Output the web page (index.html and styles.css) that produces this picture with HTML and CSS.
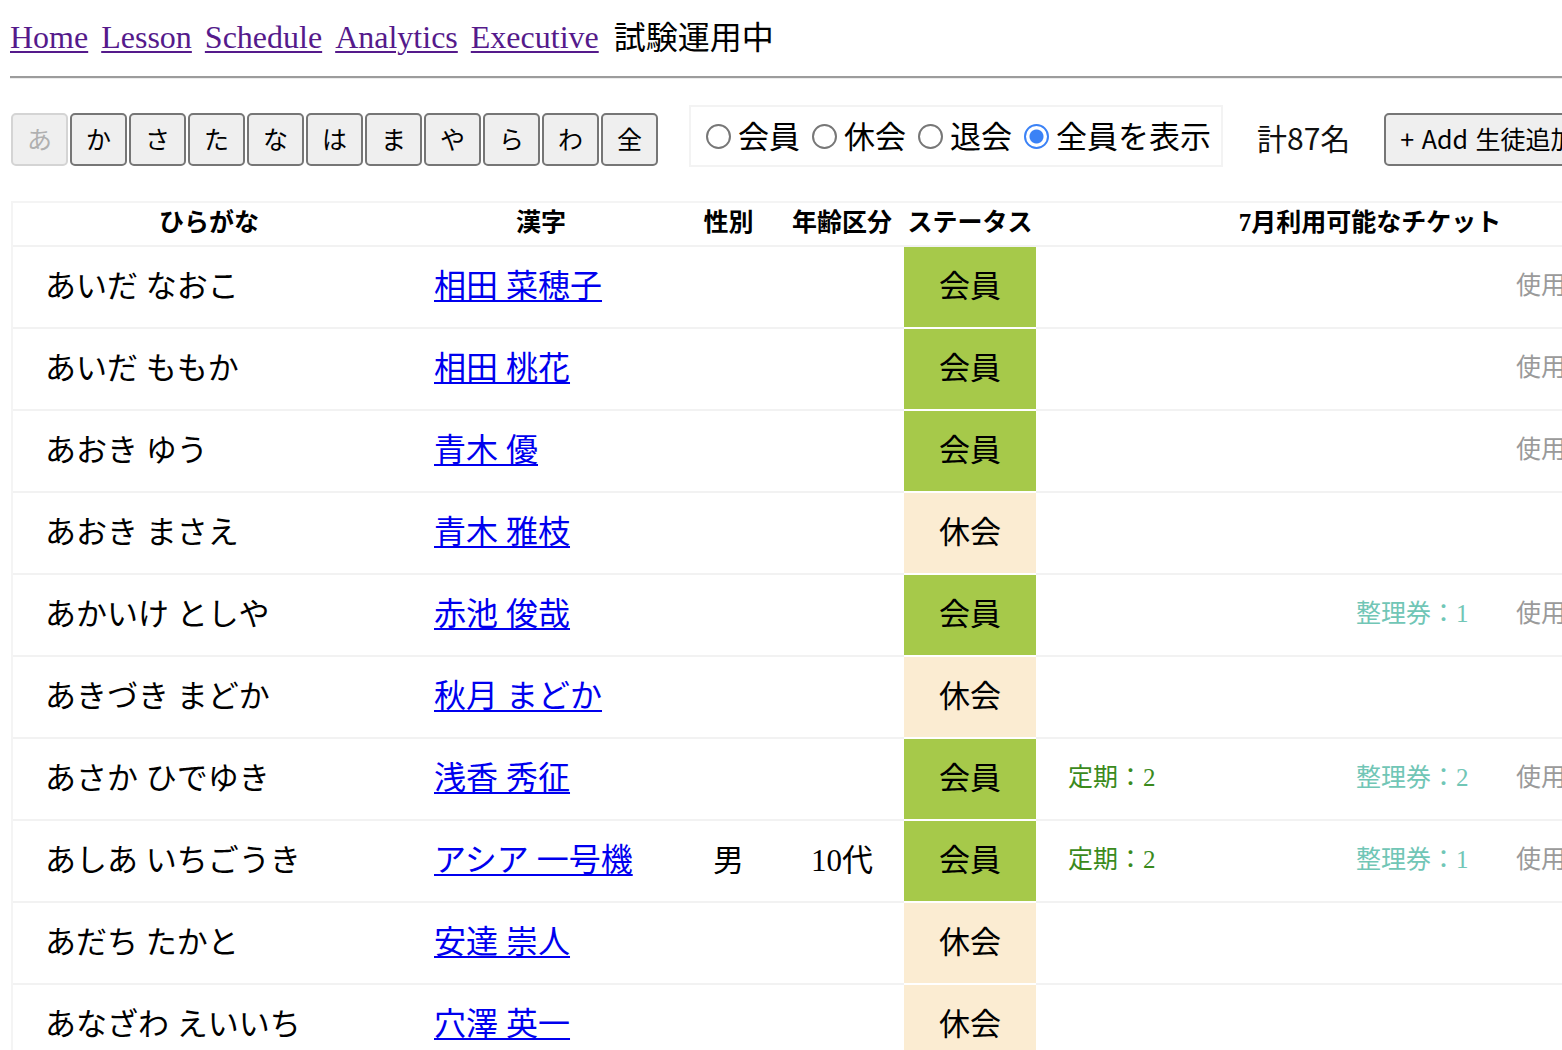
FILE: index.html
```html
<!DOCTYPE html>
<html lang="ja">
<head>
<meta charset="utf-8">
<title>生徒一覧</title>
<link rel="stylesheet" href="styles.css">
</head>
<body>
<div class="page">
  <nav class="nav">
    <a href="#" class="nav-link">Home</a>
    <a href="#" class="nav-link">Lesson</a>
    <a href="#" class="nav-link">Schedule</a>
    <a href="#" class="nav-link">Analytics</a>
    <a href="#" class="nav-link">Executive</a>
    <span class="nav-note">試験運用中</span>
  </nav>
  <hr class="rule">
  <div class="toolbar">
    <div class="kana-group">
      <button class="kana kana-disabled" disabled>あ</button>
      <button class="kana">か</button>
      <button class="kana">さ</button>
      <button class="kana">た</button>
      <button class="kana">な</button>
      <button class="kana">は</button>
      <button class="kana">ま</button>
      <button class="kana">や</button>
      <button class="kana">ら</button>
      <button class="kana">わ</button>
      <button class="kana">全</button>
    </div>
    <div class="radio-box">
      <label class="radio"><span class="dot"></span>会員</label>
      <label class="radio"><span class="dot"></span>休会</label>
      <label class="radio"><span class="dot"></span>退会</label>
      <label class="radio"><span class="dot dot-on"></span>全員を表示</label>
    </div>
    <div class="count">計87名</div>
    <button class="add-btn">+ Add 生徒追加</button>
  </div>
  <table class="students">
    <colgroup>
      <col class="c-kana"><col class="c-kanji"><col class="c-sex"><col class="c-age"><col class="c-status"><col class="c-ticket">
    </colgroup>
    <thead>
      <tr><th>ひらがな</th><th>漢字</th><th>性別</th><th>年齢区分</th><th>ステータス</th><th>7月利用可能なチケット</th></tr>
    </thead>
    <tbody>
      <tr><td class="kana-name">あいだ なおこ</td><td class="kanji"><a href="#">相田 菜穂子</a></td><td class="mid"></td><td class="mid"></td><td class="status member">会員</td><td class="tickets"><span class="t-teiki"></span><span class="t-seiri"></span><span class="t-used">使用済</span></td></tr>
      <tr><td class="kana-name">あいだ ももか</td><td class="kanji"><a href="#">相田 桃花</a></td><td class="mid"></td><td class="mid"></td><td class="status member">会員</td><td class="tickets"><span class="t-teiki"></span><span class="t-seiri"></span><span class="t-used">使用済</span></td></tr>
      <tr><td class="kana-name">あおき ゆう</td><td class="kanji"><a href="#">青木 優</a></td><td class="mid"></td><td class="mid"></td><td class="status member">会員</td><td class="tickets"><span class="t-teiki"></span><span class="t-seiri"></span><span class="t-used">使用済</span></td></tr>
      <tr><td class="kana-name">あおき まさえ</td><td class="kanji"><a href="#">青木 雅枝</a></td><td class="mid"></td><td class="mid"></td><td class="status rest">休会</td><td class="tickets"></td></tr>
      <tr><td class="kana-name">あかいけ としや</td><td class="kanji"><a href="#">赤池 俊哉</a></td><td class="mid"></td><td class="mid"></td><td class="status member">会員</td><td class="tickets"><span class="t-teiki"></span><span class="t-seiri">整理券：1</span><span class="t-used">使用済</span></td></tr>
      <tr><td class="kana-name">あきづき まどか</td><td class="kanji"><a href="#">秋月 まどか</a></td><td class="mid"></td><td class="mid"></td><td class="status rest">休会</td><td class="tickets"></td></tr>
      <tr><td class="kana-name">あさか ひでゆき</td><td class="kanji"><a href="#">浅香 秀征</a></td><td class="mid"></td><td class="mid"></td><td class="status member">会員</td><td class="tickets"><span class="t-teiki">定期：2</span><span class="t-seiri">整理券：2</span><span class="t-used">使用済</span></td></tr>
      <tr><td class="kana-name">あしあ いちごうき</td><td class="kanji"><a href="#">アシア 一号機</a></td><td class="mid">男</td><td class="mid">10代</td><td class="status member">会員</td><td class="tickets"><span class="t-teiki">定期：2</span><span class="t-seiri">整理券：1</span><span class="t-used">使用済</span></td></tr>
      <tr><td class="kana-name">あだち たかと</td><td class="kanji"><a href="#">安達 崇人</a></td><td class="mid"></td><td class="mid"></td><td class="status rest">休会</td><td class="tickets"></td></tr>
      <tr><td class="kana-name">あなざわ えいいち</td><td class="kanji"><a href="#">穴澤 英一</a></td><td class="mid"></td><td class="mid"></td><td class="status rest">休会</td><td class="tickets"></td></tr>
    </tbody>
  </table>
</div>
</body>
</html>
```

FILE: styles.css
```css
html {
  overflow: hidden;
}
body {
  margin: 0;
  font-family: "Liberation Serif", "Noto Sans CJK JP", serif;
  color: #000;
  background: #fff;
}
.page {
  padding: 17px 0 0 10px;
  width: 1720px;
}
.nav {
  display: flex;
  align-items: center;
  gap: 13px;
  height: 40px;
  font-size: 32px;
  line-height: 40px;
}
.nav-link {
  color: #551a8b;
  text-decoration: underline;
  text-decoration-thickness: 2px;
  text-underline-offset: 3px;
}
.nav-note {
  font-family: "Noto Sans CJK JP", sans-serif;
  font-size: 32px;
  margin-left: 2px;
  position: relative;
  top: -2px;
}
.rule {
  margin: 19px 0 0 0;
  border: 0;
  border-top: 2px solid #9c9c9c;
  border-bottom: 1px solid #ececec;
  height: 0;
}
.toolbar {
  display: flex;
  align-items: flex-start;
  margin-top: 26px;
}
.kana-group {
  display: flex;
  gap: 2px;
  margin-top: 8px;
  margin-left: 1px;
}
.kana {
  width: 57px;
  height: 53px;
  box-sizing: border-box;
  border: 2px solid #767676;
  border-radius: 5px;
  background: #efefef;
  font-family: "Noto Sans CJK JP", sans-serif;
  font-size: 25px;
  color: #000;
  padding: 0 0 3px;
}
.kana-disabled {
  border-color: #d4d4d4;
  color: #b0b0b0;
  background: #efefef;
}
.radio-box {
  display: flex;
  align-items: center;
  margin-left: 31px;
  height: 62px;
  box-sizing: border-box;
  border: 2px solid #f3f3f3;
  padding: 0 6px 3px 15px;
  font-family: "Noto Sans CJK JP", sans-serif;
  font-size: 31px;
  width: 534px;
}
.radio {
  display: flex;
  align-items: center;
  margin-right: 12px;
}
.radio:last-child {
  margin-right: 0;
}
.dot {
  width: 25px;
  height: 25px;
  border: 2px solid #777;
  border-radius: 50%;
  margin-right: 7px;
  box-sizing: border-box;
  flex: none;
  position: relative;
  top: 2px;
}
.dot-on {
  border: 2px solid #3b82f6;
  background: radial-gradient(circle, #3b82f6 0 6.5px, #fff 7.5px);
}
.count {
  margin-left: 34px;
  margin-top: 12px;
  font-family: "Noto Sans CJK JP", sans-serif;
  font-size: 30px;
  line-height: 40px;
  color: #111;
}
.add-btn {
  margin-left: 34px;
  margin-top: 8px;
  height: 53px;
  box-sizing: border-box;
  border: 2px solid #767676;
  border-radius: 5px;
  background: #efefef;
  font-family: "Noto Sans CJK JP", sans-serif;
  font-size: 25px;
  padding: 0 14px 3px;
  white-space: nowrap;
  color: #000;
  word-spacing: 2px;
}
.students {
  margin-top: 34px;
  margin-left: 1px;
  width: 1693px;
  table-layout: fixed;
  border-collapse: separate;
  border-spacing: 0;
  border: 2px solid #f4f4f4;
}
.c-kana { width: 392px; }
.c-kanji { width: 272px; }
.c-sex { width: 103px; }
.c-age { width: 124px; }
.c-status { width: 132px; }
.c-ticket { width: 668px; }
.students th {
  height: 44px;
  font-size: 25px;
  line-height: 30px;
  font-weight: 700;
  padding: 0 0 2px;
  box-sizing: border-box;
  text-align: center;
  border-bottom: 2px solid #f2f2f2;
  white-space: nowrap;
}
.students td {
  height: 82px;
  box-sizing: border-box;
  padding: 0 0 8px;
  font-size: 31px;
  border-bottom: 2px solid #f2f2f2;
  vertical-align: middle;
  white-space: nowrap;
}
.students td.kana-name {
  padding-left: 32px;
}
.students td.kanji {
  padding-left: 29px;
  font-size: 32px;
}
.kanji a {
  color: #0000ee;
  text-decoration-thickness: 2px;
  text-underline-offset: 3px;
}
.students td.mid {
  text-align: center;
}
.students td.status {
  text-align: center;
  border-bottom: 2px solid #fff;
}
.member {
  background: #a6c94a;
}
.rest {
  background: #fbecd2;
}
.students td.tickets {
  font-size: 25px;
  padding-left: 32px;
}
.t-teiki {
  display: inline-block;
  width: 288px;
  color: #3b8a1c;
}
.t-seiri {
  display: inline-block;
  width: 160px;
  color: #71c6b6;
}
.t-used {
  display: inline-block;
  color: #9a9a9a;
}
```
